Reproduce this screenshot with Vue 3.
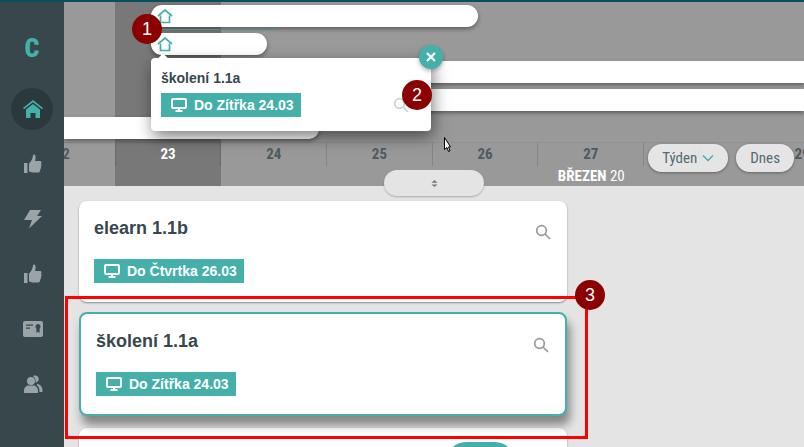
<template>
  <div class="app">
    <div class="top-strip"></div>
    <div class="shell">
      <aside class="sidebar">
        <div class="logo">C</div>
        <nav class="nav">
          <a v-for="item in navItems" :key="item.id" class="nav-item" :class="{ active: item.active }">
            <svg class="nav-icon" viewBox="0 0 20 20" aria-hidden="true">
              <path v-for="(d, i) in item.paths" :key="i" :d="d" fill="currentColor" />
              <path v-if="item.cutout" :d="item.cutout" class="cutout" />
            </svg>
          </a>
        </nav>
      </aside>

      <main class="main">
        <section class="calendar">
          <div class="today-band"></div>

          <div class="lanes">
            <div class="lane-line"></div>
            <div v-for="bar in bars" :key="bar.id" class="bar" :class="bar.cls">
              <svg v-if="bar.home" class="bar-home" viewBox="0 0 16 15" aria-hidden="true">
                <path d="M1 7 8 1l7 6" />
                <path d="M3.5 6.5V13.500h9V6.500" />
              </svg>
            </div>

            <div class="popup">
              <button class="popup-close" aria-label="Zavřít">
                <svg viewBox="0 0 12 12" aria-hidden="true"><path d="M2 2l8 8M10 2l-8 8" /></svg>
              </button>
              <div class="card-head">
                <h3 class="popup-title">školení 1.1a</h3>
              </div>
              <div class="popup-foot">
                <span class="tag">
                  <svg class="tag-icon" viewBox="0 0 16 14" aria-hidden="true">
                    <rect x="1" y="1" width="14" height="9" rx="1" />
                    <path d="M8 10v3M4.500 13h7" />
                  </svg>
                  Do Zítřka 24.03
                </span>
                <svg class="search faint" viewBox="0 0 16 16" aria-hidden="true">
                  <circle cx="6.500" cy="6.500" r="4.800" />
                  <path d="M10 10l5 5" />
                </svg>
              </div>
            </div>
          </div>

          <div class="ruler">
            <div class="days">
              <div v-for="day in days" :key="day.n" class="day" :class="{ today: day.today }">
                <div class="day-num">{{ day.n }}</div>
                <div v-if="day.month" class="month"><b>BŘEZEN</b> 20</div>
              </div>
            </div>
          </div>

          <div class="range-btns">
            <button class="pill-btn">
              Týden
              <svg class="chev" viewBox="0 0 12 8" aria-hidden="true"><path d="M1 1.500l5 5 5-5" /></svg>
            </button>
            <button class="pill-btn">Dnes</button>
          </div>

          <button class="resize-handle" aria-label="Změnit výšku">
            <svg viewBox="0 0 8 8" aria-hidden="true"><path d="M4 0l3.500 3h-7zM4 8L.5 5h7z" /></svg>
          </button>
        </section>

        <section class="list">
          <article v-for="card in cards" :key="card.title" class="card" :class="{ selected: card.selected }">
            <div class="card-head">
              <h2 class="card-title">{{ card.title }}</h2>
              <svg class="search" viewBox="0 0 16 16" aria-hidden="true">
                <circle cx="6.500" cy="6.500" r="4.800" />
                <path d="M10 10l5 5" />
              </svg>
            </div>
            <span class="tag card-tag">
              <svg class="tag-icon" viewBox="0 0 16 14" aria-hidden="true">
                <rect x="1" y="1" width="14" height="9" rx="1" />
                <path d="M8 10v3M4.500 13h7" />
              </svg>
              {{ card.due }}
            </span>
          </article>
          <article class="card next-card">
            <div class="next-pill"></div>
          </article>
        </section>
      </main>
    </div>

    <!-- annotations drawn over the screenshot -->
    <div class="red-frame"></div>
    <div v-for="m in markers" :key="m.n" class="marker" :class="'marker-' + m.n">{{ m.n }}</div>
    <svg class="cursor" viewBox="0 0 7 15" aria-hidden="true">
      <path d="M.5.5v12l2.500-2 1.500 4 1.500-.6-1.500-4H6.500z" />
    </svg>
  </div>
</template>

<script setup>
const thumb = [
  'M1 9h3.500v10H1z',
  'M6 9.500C8 8 9.500 5 10 1.500c.2-1 1.500-1.200 2-.5 1 1.400.8 3.500 0 6h5c1.600 0 2 2 1 3 .9.900.7 2.200-.2 2.800.6 1 .2 2.300-.7 2.700.4 1.500-.4 3-2.100 3H10c-1.600 0-2.500-.7-4-1z',
]

const navItems = [
  {
    id: 'home',
    active: true,
    paths: [
      'M10 1 0 9l1 1.300L10 3.300l9 7L20 9z',
      'M3 10.500 10 5l7 5.500V19h-4.500v-5h-5v5H3z',
    ],
  },
  { id: 'like', paths: thumb },
  { id: 'bolt', paths: ['M7 1h11l-4 6h5L6 19.500 9 11H1z'] },
  { id: 'like2', paths: thumb },
  {
    id: 'cert',
    paths: ['M2 2h16a2 2 0 0 1 2 2v12a2 2 0 0 1-2 2H2a2 2 0 0 1-2-2V4a2 2 0 0 1 2-2z'],
    cutout: 'M3 5.500h7v1.300H3zM3 8.500h4v1.300H3zM15 5a2.600 2.600 0 0 1 1.600 4.600V14L15 12.800 13.400 14V9.600A2.600 2.600 0 0 1 15 5z',
  },
  {
    id: 'people',
    paths: [
      'M8 3a4 4 0 1 1 0 8 4 4 0 0 1 0-8zM1 19v-2.500C1 13.500 3.500 11.500 5.500 11.500h5c2 0 4.500 2 4.500 5V19z',
      'M12 1.500a3.500 3.500 0 0 1 2 6.500c-.4.500-.8.800-1.300 1 .2-2.800-.6-5.200-2.600-7 .6-.4 1.200-.5 1.900-.5zM14.500 10c2.800.4 5 3 5 6.500V18h-3c0-3-.7-5.700-3-7.300z',
    ],
  },
]

const bars = [
  { id: 1, cls: 'bar-a', home: true },
  { id: 2, cls: 'bar-b', home: true },
  { id: 3, cls: 'bar-c' },
  { id: 4, cls: 'bar-d' },
  { id: 5, cls: 'bar-e' },
]

const days = [
  { n: 22 },
  { n: 23, today: true },
  { n: 24 },
  { n: 25 },
  { n: 26 },
  { n: 27, month: true },
  { n: 28 },
  { n: 29 },
]

const cards = [
  { title: 'elearn 1.1b', due: 'Do Čtvrtka 26.03' },
  { title: 'školení 1.1a', due: 'Do Zítřka 24.03', selected: true },
]

const markers = [{ n: 1 }, { n: 2 }, { n: 3 }]
</script>

<style>
html, body { margin: 0; background: #e4e4e4; }
</style>

<style scoped>
*, *::before, *::after { box-sizing: border-box; margin: 0; padding: 0; }

.app {
  position: relative;
  width: 804px;
  height: 447px;
  overflow: hidden;
  background: #e4e4e4;
  font-family: "Liberation Sans", Arial, sans-serif;
  color: #37474f;
}

.top-strip { height: 2px; background: #0a4f5a; }

.shell { display: flex; height: 445px; }

.sidebar { flex: 0 0 64px; background: #37474c; z-index: 2; }

.logo {
  height: 79px;
  padding-top: 12px;
  display: flex;
  align-items: center;
  justify-content: center;
  font-family: Roboto, sans-serif;
  font-weight: 900;
  font-size: 26px;
  font-stretch: 75%;
  color: #45b0a9;
}

.nav-item {
  height: 55px;
  display: flex;
  align-items: center;
  justify-content: center;
  color: #9aa4a7;
}
.nav-item.active { color: #45b0a9; }
.nav-item.active::before {
  content: "";
  position: absolute;
  width: 42px;
  height: 42px;
  border-radius: 50%;
  background: #2b383c;
}
.nav-icon { position: relative; left: 1px; width: 20px; height: 20px; }
.cutout { fill: #37474c; }

.main { flex: 1; min-width: 0; display: flex; flex-direction: column; }

.calendar {
  position: relative;
  flex: 0 0 184px;
  background: #999;
  display: flex;
  flex-direction: column;
}

.today-band {
  position: absolute;
  left: 51px;
  top: 0;
  bottom: 0;
  width: 106px;
  background: #787878;
}

.lanes { position: relative; flex: 0 0 140px; }

.lane-line {
  position: absolute;
  left: 92px;
  top: 27px;
  width: 120px;
  height: 1px;
  background: #5fa8a3;
}

.bar {
  position: absolute;
  height: 22px;
  background: #fff;
  box-shadow: 0 2px 4px rgba(0, 0, 0, 0.4);
  display: flex;
  align-items: center;
}
.bar-a { left: 87px; top: 3px; width: 327px; border-radius: 11px; }
.bar-b { left: 87px; top: 31px; width: 116px; border-radius: 11px; }
.bar-c { left: 360px; top: 59px; right: 0; }
.bar-d { left: 360px; top: 87px; right: 0; }
.bar-e { left: 0; top: 115px; width: 255px; border-radius: 0 0 10px 0; }

.bar-home { width: 16px; height: 15px; margin-left: 6px; fill: none; stroke: #45b0a9; stroke-width: 1.700; }

.popup {
  position: absolute;
  left: 87px;
  top: 56px;
  width: 280px;
  height: 73px;
  padding: 11px 10px 0;
  background: #fff;
  border-radius: 4px;
  box-shadow: 2px 6px 16px rgba(0, 0, 0, 0.5);
}
.popup::before {
  content: "";
  position: absolute;
  left: 8px;
  top: -3px;
  width: 8px;
  height: 8px;
  background: #fff;
  transform: rotate(45deg);
}
.popup-title { font-size: 14px; line-height: 18px; font-weight: 700; color: #37474f; }
.popup-foot { display: flex; justify-content: space-between; align-items: center; margin-top: 6px; padding-right: 12px; }

.popup-close {
  position: absolute;
  right: -12px;
  top: -13px;
  width: 24px;
  height: 24px;
  border: 0;
  border-radius: 50%;
  background: #45b0a9;
  box-shadow: 0 2px 4px rgba(0, 0, 0, 0.3);
  display: flex;
  align-items: center;
  justify-content: center;
}
.popup-close svg { width: 12px; height: 12px; fill: none; stroke: #fff; stroke-width: 2.200; }

.ruler {
  flex: 1;
  position: relative;
  overflow: hidden;
  border-top: 1px solid rgba(0, 0, 0, 0.06);
}
.days { display: flex; margin-left: -54px; }
.day { flex: 0 0 105.700px; text-align: center; }
.day-num {
  height: 23px;
  line-height: 22px;
  border-right: 1px solid rgba(0, 0, 0, 0.12);
  font-family: Roboto, sans-serif;
  font-weight: 700;
  font-size: 15px;
  font-stretch: 75%;
  color: #4e5a5f;
}
.day.today .day-num { color: #fff; }
.month {
  margin-top: 2px;
  line-height: 16px;
  font-family: Roboto, sans-serif;
  font-size: 15px;
  font-stretch: 75%;
  color: #fff;
  white-space: nowrap;
}

.range-btns { position: absolute; right: 10px; top: 142px; display: flex; gap: 8px; }
.pill-btn {
  height: 28px;
  padding: 0 14px;
  border: 0;
  border-radius: 14px;
  background: rgba(234, 234, 234, 0.94);
  box-shadow: 0 1px 3px rgba(0, 0, 0, 0.35);
  font-family: Roboto, sans-serif;
  font-size: 15px;
  font-stretch: 75%;
  color: #546a73;
  display: flex;
  align-items: center;
  gap: 5px;
}
.chev { width: 12px; height: 8px; fill: none; stroke: #45b0a9; stroke-width: 1.500; }

.resize-handle {
  position: absolute;
  left: 320px;
  top: 168px;
  width: 100px;
  height: 26px;
  border: 0;
  border-radius: 13px;
  background: #e4e4e4;
  box-shadow: 0 1px 2px rgba(0, 0, 0, 0.25);
  display: flex;
  align-items: center;
  justify-content: center;
  z-index: 1;
}
.resize-handle svg { width: 7px; height: 7px; fill: #777; }

.list { flex: 1; padding: 15px 0 0 15px; overflow: hidden; }

.card {
  position: relative;
  width: 488px;
  height: 101px;
  margin-bottom: 10px;
  padding: 15px 16px 19px 15px;
  background: #fff;
  border-radius: 8px;
  box-shadow: 0 1px 2px rgba(0, 0, 0, 0.4);
}
.card.selected {
  height: 104px;
  margin-bottom: 12px;
  border: 2px solid #45b0a9;
  z-index: 1;
  box-shadow: 3px 9px 10px rgba(0, 0, 0, 0.42);
}
.card-head { display: flex; justify-content: space-between; align-items: flex-start; }
.card-title { font-size: 18px; line-height: 24px; font-weight: 700; color: #37474f; }

.search { width: 16px; height: 16px; fill: none; stroke: #9a9a9a; stroke-width: 1.700; }
.card-head .search { margin-top: 8px; }
.search.faint { stroke: #cfcfcf; }

.tag {
  display: inline-flex;
  align-items: center;
  gap: 7px;
  height: 24px;
  padding: 0 7px 0 10px;
  background: #45b0a9;
  color: #fff;
  font-size: 14px;
  font-weight: 700;
  white-space: nowrap;
}
.card-tag { margin-top: 19px; }
.tag-icon { width: 16px; height: 14px; fill: none; stroke: #fff; stroke-width: 2; }

.next-card { height: 60px; margin: 0; }
.next-pill {
  position: absolute;
  left: 367px;
  top: 14px;
  width: 69px;
  height: 40px;
  border-radius: 20px;
  background: #45b0a9;
}

.red-frame {
  position: absolute;
  left: 65px;
  top: 296px;
  width: 523px;
  height: 143px;
  border: 3px solid #f00;
  z-index: 3;
}

.marker {
  position: absolute;
  width: 30px;
  height: 30px;
  border-radius: 50%;
  background: #8b0000;
  color: #fff;
  font-size: 18px;
  line-height: 30px;
  text-align: center;
  z-index: 4;
}
.marker-1 { left: 132px; top: 14px; }
.marker-2 { left: 402px; top: 80px; }
.marker-3 { left: 575px; top: 280px; }

.cursor {
  position: absolute;
  left: 444px;
  top: 137px;
  width: 7px;
  height: 15px;
  fill: #fff;
  stroke: #000;
  stroke-width: 1;
  z-index: 4;
}
</style>
